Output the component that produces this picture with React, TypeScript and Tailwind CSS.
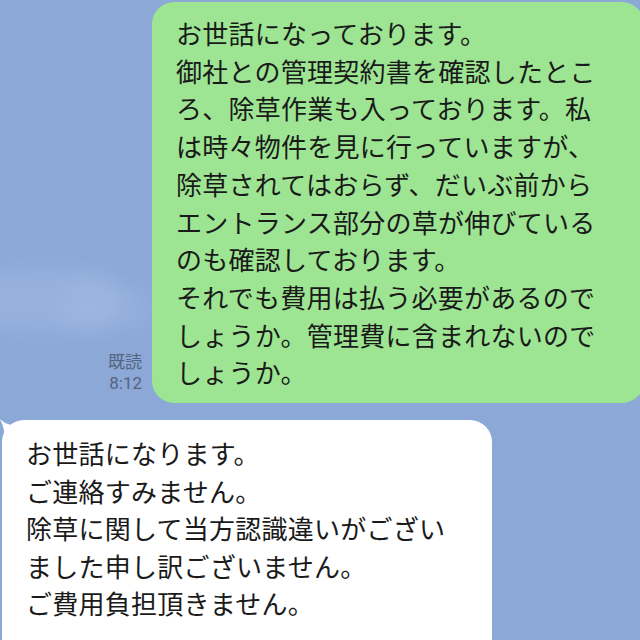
import React from "react";

const green = [
  "お世話になっております。",
  "御社との管理契約書を確認したとこ",
  "ろ、除草作業も入っております。私",
  "は時々物件を見に行っていますが、",
  "除草されてはおらず、だいぶ前から",
  "エントランス部分の草が伸びている",
  "のも確認しております。",
  "それでも費用は払う必要があるので",
  "しょうか。管理費に含まれないので",
  "しょうか。",
];

const white = [
  "お世話になります。",
  "ご連絡すみません。",
  "除草に関して当方認識違いがござい",
  "ました申し訳ございません。",
  "ご費用負担頂きません。",
];

const font = { fontFamily: '"Noto Sans CJK JP", "Noto Sans", sans-serif' };

export default function App() {
  return (
    <div
      className="relative w-[640px] h-[640px] overflow-hidden bg-[#8ba8d7] flex flex-col"
      style={font}
    >
      <div className="pointer-events-none absolute left-[-20px] top-[270px] w-[140px] h-[60px] rounded-full bg-[#a9c0e6] opacity-40 blur-[10px]" />
      <div className="pointer-events-none absolute left-[60px] top-[285px] w-[90px] h-[45px] rounded-full bg-[#a9c0e6] opacity-30 blur-[10px]" />

      <div className="relative flex items-end pt-[2px]">
        <div className="flex-1 flex flex-col items-end pr-[10px] pb-[8px] text-[17px] leading-[23px] text-[#55647f]">
          <span>既読</span>
          <span style={{ fontFamily: 'Roboto, "Noto Sans", sans-serif' }}>8:12</span>
        </div>
        <div className="w-[492px] shrink-0 mr-[-4px] rounded-[22px] bg-[#9de592] pl-[24px] pt-[12px] pb-[12px] text-[26px] leading-[37.7px] tracking-[0.25px] text-[#1a1a1a]">
          {green.map((l, i) => (
            <div key={i} className="whitespace-nowrap">
              {l}
            </div>
          ))}
        </div>
      </div>

      <div className="relative shrink-0 mt-[17px] ml-[2px] w-[490px] rounded-[22px] bg-white pl-[24px] pt-[14px] pb-[40px] text-[26px] leading-[37.5px] tracking-[0.25px] text-[#1a1a1a]">
        <svg
          className="absolute left-[-2px] top-[-1px]"
          width="24"
          height="24"
          viewBox="0 0 24 24"
        >
          <path d="M0 0 Q6 6 14 6 L20 6 L20 22 L4 22 Q6 12 0 0 Z" fill="#ffffff" />
        </svg>
        {white.map((l, i) => (
          <div key={i} className="relative whitespace-nowrap">
            {l}
          </div>
        ))}
      </div>
    </div>
  );
}
